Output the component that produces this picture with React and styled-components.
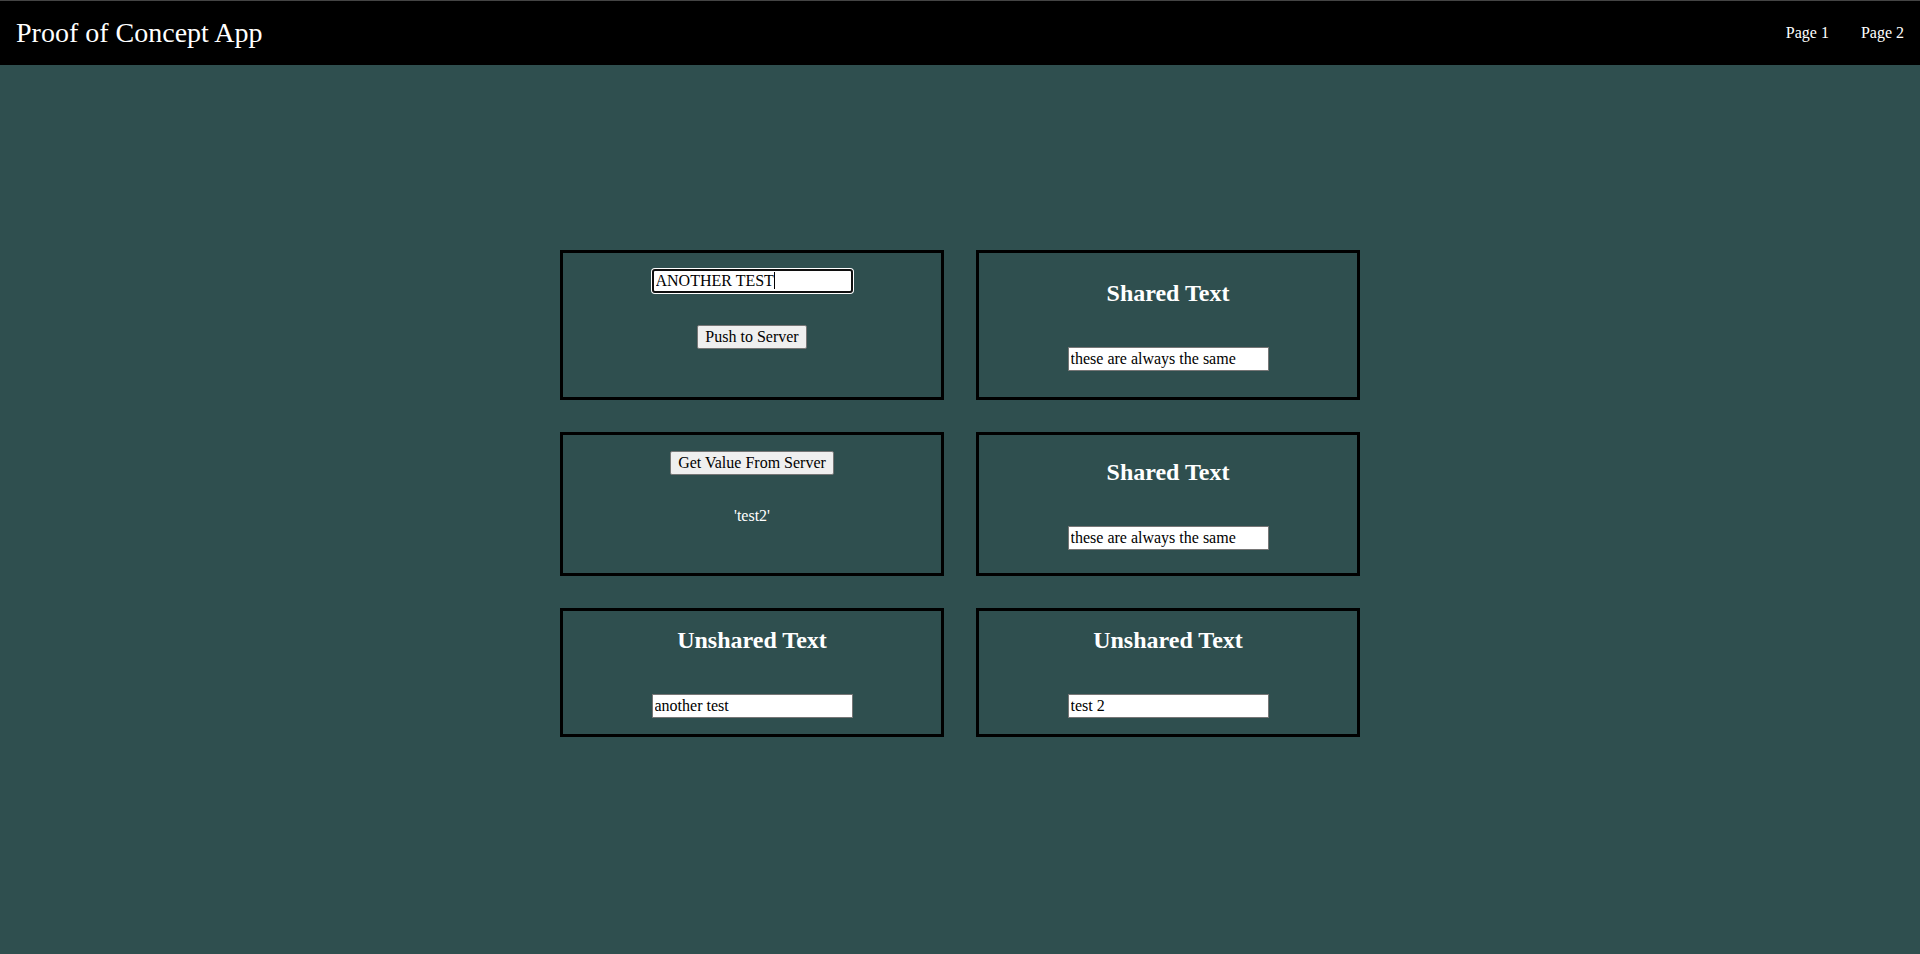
import React from "react";
import styled, { createGlobalStyle, css } from "styled-components";

const GlobalStyle = createGlobalStyle`
  html, body {
    margin: 0;
    padding: 0;
    min-height: 100%;
    background: #2f4f4f;
    font-family: "Liberation Serif", "Times New Roman", serif;
    color: #ffffff;
  }
  #root {
    min-height: 954px;
  }
`;

const Page = styled.div`
  min-height: 954px;
  background: #2f4f4f;
`;

const Header = styled.header`
  display: flex;
  align-items: center;
  justify-content: space-between;
  height: 64px;
  border-top: 1px solid #444444;
  background: #000000;
`;

const Title = styled.h1`
  margin: 0;
  padding-left: 16px;
  font-size: 28px;
  font-weight: normal;
  color: #ffffff;
`;

const Nav = styled.nav`
  display: flex;
  align-items: center;
`;

const NavLink = styled.a`
  padding: 0 16px;
  font-size: 16px;
  color: #ffffff;
  text-decoration: none;
  cursor: pointer;
`;

const Main = styled.main`
  display: flex;
  justify-content: center;
  padding-top: 185px;
`;

const Grid = styled.div`
  display: grid;
  grid-template-columns: 384px 384px;
  column-gap: 32px;
  row-gap: 32px;
`;

const Card = styled.section`
  box-sizing: border-box;
  display: flex;
  flex-direction: column;
  align-items: center;
  border: 3px solid #000000;
  ${({ $centered }) =>
    $centered
      ? css`
          justify-content: center;
          padding: 16px;
          gap: 40px;
        `
      : css`
          justify-content: flex-start;
          padding: 16px 16px 48px;
          gap: 32px;
        `}
`;

const Heading = styled.h2`
  margin: 0;
  font-size: 24px;
  font-weight: bold;
  color: #ffffff;
  line-height: normal;
`;

const InputWrap = styled.div`
  position: relative;
  display: flex;
`;

const TextInput = styled.input`
  box-sizing: border-box;
  width: 201px;
  height: 24px;
  margin: 0;
  padding: 1px 2px;
  font-family: "Liberation Serif", "Times New Roman", serif;
  font-size: 16px;
  color: #000000;
  background: #ffffff;
  border: 1px solid #767676;
  border-radius: 0;
  outline: none;
  ${({ $focused }) =>
    $focused &&
    css`
      padding: 0 1px 0 2px;
      border: 2px solid #101010;
      border-radius: 3px;
      box-shadow: 0 0 0 1px #ffffff;
    `}
`;

const Caret = styled.span`
  position: absolute;
  top: 3px;
  left: ${({ $left }) => $left}px;
  width: 1px;
  height: 17px;
  background: #000000;
`;

const Button = styled.button`
  box-sizing: border-box;
  height: 24px;
  margin: 0;
  padding: 2px 7px;
  font-family: "Liberation Serif", "Times New Roman", serif;
  font-size: 16px;
  line-height: normal;
  color: #000000;
  background: #efefef;
  border: 1px solid #767676;
  border-radius: 2px;
  cursor: pointer;
`;

const Result = styled.div`
  font-size: 16px;
  line-height: normal;
  color: #ffffff;
`;

export default function App() {
  return (
    <Page>
      <GlobalStyle />
      <Header>
        <Title>Proof of Concept App</Title>
        <Nav>
          <NavLink>Page 1</NavLink>
          <NavLink>Page 2</NavLink>
        </Nav>
      </Header>
      <Main>
        <Grid>
          <Card>
            <InputWrap>
              <TextInput $focused defaultValue="ANOTHER TEST" />
              <Caret $left={122} />
            </InputWrap>
            <Button>Push to Server</Button>
          </Card>
          <Card $centered>
            <Heading>Shared Text</Heading>
            <TextInput defaultValue="these are always the same" />
          </Card>
          <Card>
            <Button>Get Value From Server</Button>
            <Result>'test2'</Result>
          </Card>
          <Card $centered>
            <Heading>Shared Text</Heading>
            <TextInput defaultValue="these are always the same" />
          </Card>
          <Card $centered>
            <Heading>Unshared Text</Heading>
            <TextInput defaultValue="another test" />
          </Card>
          <Card $centered>
            <Heading>Unshared Text</Heading>
            <TextInput defaultValue="test 2" />
          </Card>
        </Grid>
      </Main>
    </Page>
  );
}
